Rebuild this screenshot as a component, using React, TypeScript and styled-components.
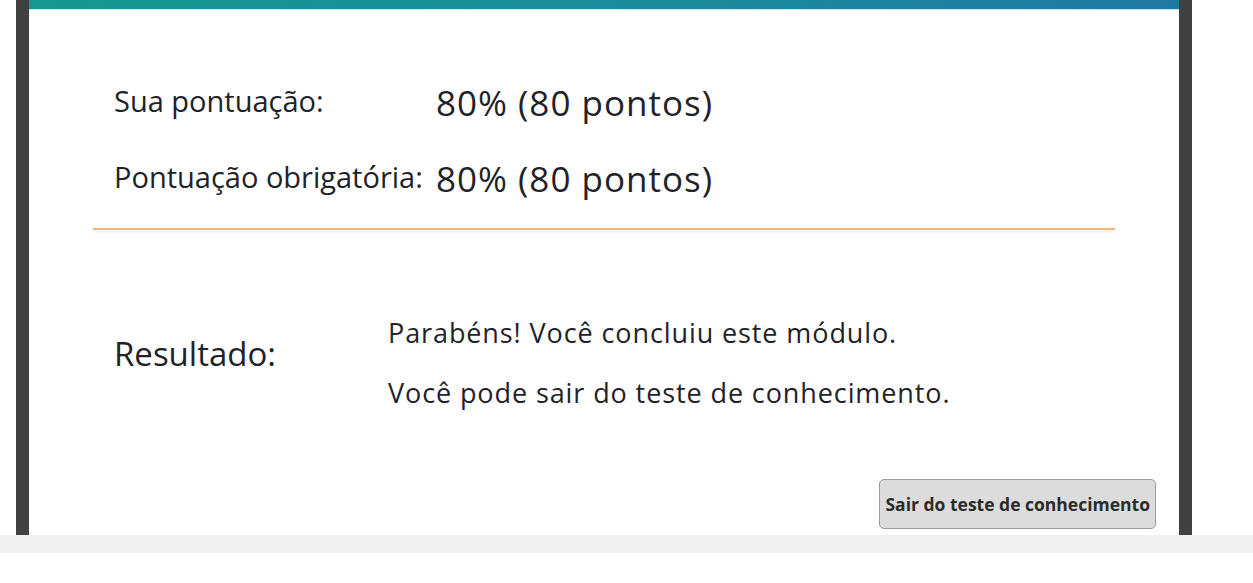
import React from 'react'
import styled, { createGlobalStyle } from 'styled-components'

const GlobalStyle = createGlobalStyle`
    html, body {
        margin: 0;
        padding: 0;
        background: #ffffff;
    }
    body {
        font-family: 'Open Sans', 'Noto Sans', Arial, sans-serif;
        color: #1f2329;
    }
`

const Page = styled.div`
    display: flex;
    flex-direction: column;
    width: 1253px;
`

const Frame = styled.div`
    margin-left: 16px;
    width: 1150px;
    height: 535px;
    border-left: 13px solid #404040;
    border-right: 13px solid #404040;
    display: flex;
    flex-direction: column;
    background: #ffffff;
`

const TopBar = styled.div`
    height: 9px;
    background: linear-gradient(90deg, #16998f 0%, #1b8d9c 50%, #1f78a2 100%);
    border-bottom: 1px solid #b7eef2;
`

const Content = styled.div`
    flex: 1;
    display: flex;
    flex-direction: column;
    padding: 0 23px 0 64px;
`

const ScoreTable = styled.div`
    display: grid;
    grid-template-columns: 322px 1fr;
    row-gap: 35px;
    padding: 71px 0 0 21px;
    align-items: start;
`

const Label = styled.span`
    font-size: 29px;
    line-height: 40px;
`

const Value = styled.span`
    font-size: 35px;
    line-height: 38px;
    letter-spacing: 1px;
    padding-top: 3px;
`

const Divider = styled.div`
    margin: 30px 41px 0 0;
    height: 2px;
    background: #f5b77a;
    box-shadow: 0 2px 3px rgba(0, 0, 0, 0.08);
`

const ResultRow = styled.div`
    display: grid;
    grid-template-columns: 274px 1fr;
    align-items: start;
    padding: 85px 0 0 21px;
`

const ResultLabel = styled.span`
    font-size: 33px;
    line-height: 40px;
    margin-top: 19px;
`

const Messages = styled.div`
    display: flex;
    flex-direction: column;
    gap: 24px;
`

const Message = styled.p`
    margin: 0;
    font-size: 27px;
    line-height: 36px;
    letter-spacing: 0.9px;
`

const Actions = styled.div`
    margin-top: auto;
    display: flex;
    justify-content: flex-end;
    padding-bottom: 6px;
`

const ExitButton = styled.button`
    height: 50px;
    padding: 0 5px;
    border: 1px solid #9a9a9a;
    border-radius: 5px;
    background: #dcdcdc;
    font-family: 'Open Sans', 'Noto Sans', Arial, sans-serif;
    font-weight: 700;
    font-size: 17.5px;
    color: #2b2b2b;
    cursor: pointer;
`

const BottomStrip = styled.div`
    height: 18px;
    background: #f0f0f0;
`

const scores = [
    { label: 'Sua pontuação:', value: '80% (80 pontos)' },
    { label: 'Pontuação obrigatória:', value: '80% (80 pontos)' },
]

export default function App() {
    return (
        <Page>
            <GlobalStyle />
            <Frame>
                <TopBar />
                <Content>
                    <ScoreTable>
                        {scores.map((s) => (
                            <React.Fragment key={s.label}>
                                <Label>{s.label}</Label>
                                <Value>{s.value}</Value>
                            </React.Fragment>
                        ))}
                    </ScoreTable>
                    <Divider />
                    <ResultRow>
                        <ResultLabel>Resultado:</ResultLabel>
                        <Messages>
                            <Message>Parabéns! Você concluiu este módulo.</Message>
                            <Message>Você pode sair do teste de conhecimento.</Message>
                        </Messages>
                    </ResultRow>
                    <Actions>
                        <ExitButton>Sair do teste de conhecimento</ExitButton>
                    </Actions>
                </Content>
            </Frame>
            <BottomStrip />
        </Page>
    )
}
